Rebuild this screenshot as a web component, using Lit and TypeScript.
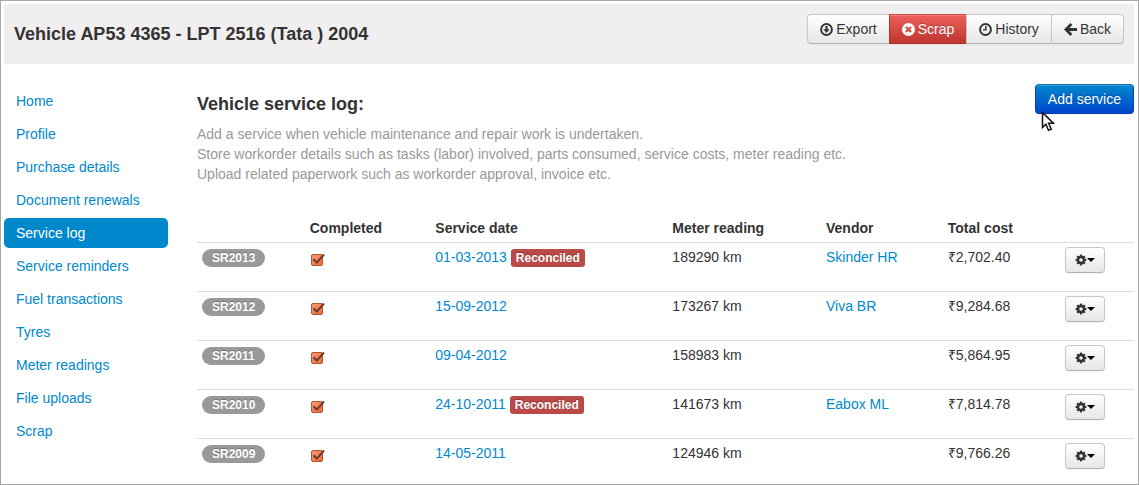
import { LitElement, html, css, svg, nothing } from "lit";
import { customElement, property } from "lit/decorators.js";

interface Service {
  id: string;
  date: string;
  reconciled: boolean;
  meter: string;
  vendor: string;
  cost: string;
}

const NAV = [
  "Home", "Profile", "Purchase details", "Document renewals", "Service log",
  "Service reminders", "Fuel transactions", "Tyres", "Meter readings",
  "File uploads", "Scrap",
];

const SERVICES: Service[] = [
  { id: "SR2013", date: "01-03-2013", reconciled: true, meter: "189290 km", vendor: "Skinder HR", cost: "₹2,702.40" },
  { id: "SR2012", date: "15-09-2012", reconciled: false, meter: "173267 km", vendor: "Viva BR", cost: "₹9,284.68" },
  { id: "SR2011", date: "09-04-2012", reconciled: false, meter: "158983 km", vendor: "", cost: "₹5,864.95" },
  { id: "SR2010", date: "24-10-2011", reconciled: true, meter: "141673 km", vendor: "Eabox ML", cost: "₹7,814.78" },
  { id: "SR2009", date: "14-05-2011", reconciled: false, meter: "124946 km", vendor: "", cost: "₹9,766.26" },
];

const GEAR_TEETH = [0, 45, 90, 135, 180, 225, 270, 315];

const ICONS = {
  download: svg`
    <circle cx="6" cy="6" r="5" fill="none" stroke="currentColor" stroke-width="1.800"/>
    <path d="M5 2.800h2v3h2L6 9.200 3 5.800h2z" fill="currentColor"/>`,
  remove: svg`
    <path fill-rule="evenodd" fill="currentColor" d="M6 0a6 6 0 1 0 0 12A6 6 0 0 0 6 0zM4.300 2.900L6 4.600 7.700 2.900 9.100 4.300 7.400 6 9.100 7.700 7.700 9.100 6 7.400 4.300 9.100 2.900 7.700 4.600 6 2.900 4.300z"/>`,
  time: svg`
    <circle cx="6" cy="6" r="5" fill="none" stroke="currentColor" stroke-width="1.800"/>
    <path d="M5.600 2.800h1.400v4.200H3.600V5.700h2z" fill="currentColor"/>`,
  back: svg`
    <path d="M6.800 1L1.800 6l5 5M2.500 6H12" fill="none" stroke="currentColor" stroke-width="2.600"/>`,
  gear: svg`
    ${GEAR_TEETH.map((a) => svg`<rect x="4.900" y="0.600" width="2.200" height="3" fill="currentColor" transform="rotate(${a} 6 6)"/>`)}
    <circle cx="6" cy="6" r="3" fill="none" stroke="currentColor" stroke-width="2.400"/>`,
};

@customElement("app-icon")
export class AppIcon extends LitElement {
  static styles = css`
    :host { display: inline-flex; flex: none; width: 13px; height: 13px; }
    svg { display: block; width: 100%; height: 100%; }
  `;
  @property() name: keyof typeof ICONS = "gear";
  render() {
    return html`<svg viewBox="0 0 12 12" aria-hidden="true">${ICONS[this.name]}</svg>`;
  }
}

@customElement("app-root")
export class AppRoot extends LitElement {
  static styles = css`
    :host {
      display: block;
      box-sizing: border-box;
      min-height: 100vh;
      padding: 3px 4px 3px 3px;
      border: 1px solid #a8a8a8;
      background: #fff;
      color: #333;
      font: 14px/20px "Liberation Sans", Arial, sans-serif;
    }
    *, *::before { box-sizing: border-box; }
    h1, h2, p, ul { margin: 0; padding: 0; }
    h1, h2 { font-size: 18px; line-height: 20px; font-weight: bold; }
    a { color: #0088cc; text-decoration: none; }

    .header {
      display: flex;
      justify-content: space-between;
      align-items: flex-start;
      padding: 10px 10px 20px;
      background: #f0eeef;
    }
    .title { padding-top: 10px; }

    .btn {
      display: inline-flex;
      align-items: center;
      justify-content: center;
      gap: 3px;
      margin: 0;
      padding: 4px 12px;
      border: 1px solid #bbb;
      border-color: #c8c8c8 #c8c8c8 #b3b3b3;
      border-radius: 4px;
      background: linear-gradient(#fff, #e6e6e6);
      box-shadow: inset 0 1px 0 rgba(255, 255, 255, 0.2), 0 1px 2px rgba(0, 0, 0, 0.05);
      color: #333;
      font: inherit;
      text-shadow: 0 1px 1px rgba(255, 255, 255, 0.75);
      cursor: pointer;
    }
    .group { display: flex; }
    .group .btn { border-radius: 0; }
    .group .btn + .btn { margin-left: -1px; }
    .group .btn:first-child { border-radius: 4px 0 0 4px; }
    .group .btn:last-child { border-radius: 0 4px 4px 0; }
    .danger {
      background: linear-gradient(#ee5f5b, #bd362f);
      border-color: #cf4a45 #bd362f #a9302a;
      color: #fff;
      text-shadow: 0 -1px 0 rgba(0, 0, 0, 0.25);
    }
    .primary {
      background: linear-gradient(#0088cc, #0044cc);
      border-color: #0a74b8 #0044cc #003bb3;
      color: #fff;
      text-shadow: 0 -1px 0 rgba(0, 0, 0, 0.25);
    }

    .body {
      display: grid;
      grid-template-columns: 164px minmax(0, 1fr);
      column-gap: 29px;
      padding-top: 20px;
    }
    .nav { display: grid; gap: 3px; align-content: start; padding-top: 2px; list-style: none; }
    .nav a { display: block; padding: 5px 12px; border-radius: 5px; }
    .nav .active { background: #0088cc; color: #fff; }

    .intro { display: flex; justify-content: space-between; align-items: flex-start; }
    .intro h2 { padding-top: 10px; }
    .add { position: relative; display: flex; }
    .pointer { position: absolute; left: 6px; top: 27px; width: 14px; height: 21px; pointer-events: none; }
    .help { padding: 10px 0 30px; color: #999; }

    table { width: 100%; table-layout: fixed; border-collapse: separate; border-spacing: 0; }
    th, td { padding: 4px 5px; text-align: left; vertical-align: top; }
    td { height: 49px; border-top: 1px solid #ddd; }
    tr:last-child td { height: 40px; }
    .c-id { width: 11.5%; }
    .c-done { width: 13.4%; }
    .c-date { width: 25.3%; }
    .c-meter { width: 16.4%; }
    .c-vendor { width: 13%; }
    .c-cost { width: 12.5%; }

    .badge, .label {
      display: inline-block;
      padding: 2px 5px;
      border-radius: 3px;
      background: #b94a48;
      color: #fff;
      font-size: 12px;
      line-height: 14px;
      font-weight: bold;
      text-shadow: 0 -1px 0 rgba(0, 0, 0, 0.25);
      vertical-align: top;
      margin-top: 2px;
    }
    .badge { padding: 2px 10px; border-radius: 9px; background: #999; }

    .tick { display: inline-grid; width: 16px; height: 14px; margin-top: 6px; vertical-align: top; }
    .tick > * { grid-area: 1 / 1; }
    .tick input {
      appearance: none;
      width: 12px;
      height: 12px;
      margin: 1px 0 0 1px;
      border: 1px solid #b5532f;
      border-radius: 2px;
      background: linear-gradient(135deg, #fb9a72, #ec6a3c);
    }
    .tick svg { z-index: 1; width: 16px; height: 14px; pointer-events: none; }

    .small { gap: 0; width: 40px; height: 26px; padding: 0; }
    .small app-icon { width: 12px; height: 12px; }
    .caret { border: 4px solid transparent; border-top-color: #000; border-bottom: 0; }
  `;

  private row(s: Service) {
    return html`
      <tr>
        <td><span class="badge">${s.id}</span></td>
        <td>
          <label class="tick">
            <input type="checkbox" checked aria-label="${s.id} completed" />
            <svg viewBox="0 0 16 14" aria-hidden="true">
              <path d="M3.500 6.200L6.800 9.600 14 1.500" fill="none" stroke="#6b3a2c" stroke-width="2"/>
            </svg>
          </label>
        </td>
        <td>
          <a href="#">${s.date}</a>
          ${s.reconciled ? html`<span class="label">Reconciled</span>` : nothing}
        </td>
        <td>${s.meter}</td>
        <td>${s.vendor ? html`<a href="#">${s.vendor}</a>` : nothing}</td>
        <td>${s.cost}</td>
        <td>
          <button class="btn small" aria-label="Actions for ${s.id}">
            <app-icon name="gear"></app-icon><span class="caret"></span>
          </button>
        </td>
      </tr>
    `;
  }

  render() {
    return html`
      <header class="header">
        <h1 class="title">Vehicle AP53 4365 - LPT 2516 (Tata ) 2004</h1>
        <div class="group">
          <button class="btn"><app-icon name="download"></app-icon>Export</button>
          <button class="btn danger"><app-icon name="remove"></app-icon>Scrap</button>
          <button class="btn"><app-icon name="time"></app-icon>History</button>
          <button class="btn"><app-icon name="back"></app-icon>Back</button>
        </div>
      </header>
      <div class="body">
        <nav>
          <ul class="nav">
            ${NAV.map((n) => html`<li><a href="#" class=${n === "Service log" ? "active" : ""}>${n}</a></li>`)}
          </ul>
        </nav>
        <main>
          <div class="intro">
            <h2>Vehicle service log:</h2>
            <div class="add">
              <button class="btn primary">Add service</button>
              <svg class="pointer" viewBox="0 0 14 21" aria-hidden="true">
                <path d="M1.500 1.500v15l3.400-3.200 2.600 6 2.800-1.200-2.700-5.900h4.700z" fill="#fff" stroke="#111" stroke-width="1.500"/>
              </svg>
            </div>
          </div>
          <p class="help">
            Add a service when vehicle maintenance and repair work is undertaken.<br />
            Store workorder details such as tasks (labor) involved, parts consumed, service costs, meter reading etc.<br />
            Upload related paperwork such as workorder approval, invoice etc.
          </p>
          <table>
            <thead>
              <tr>
                <th class="c-id"></th>
                <th class="c-done">Completed</th>
                <th class="c-date">Service date</th>
                <th class="c-meter">Meter reading</th>
                <th class="c-vendor">Vendor</th>
                <th class="c-cost">Total cost</th>
                <th></th>
              </tr>
            </thead>
            <tbody>${SERVICES.map((s) => this.row(s))}</tbody>
          </table>
        </main>
      </div>
    `;
  }
}
